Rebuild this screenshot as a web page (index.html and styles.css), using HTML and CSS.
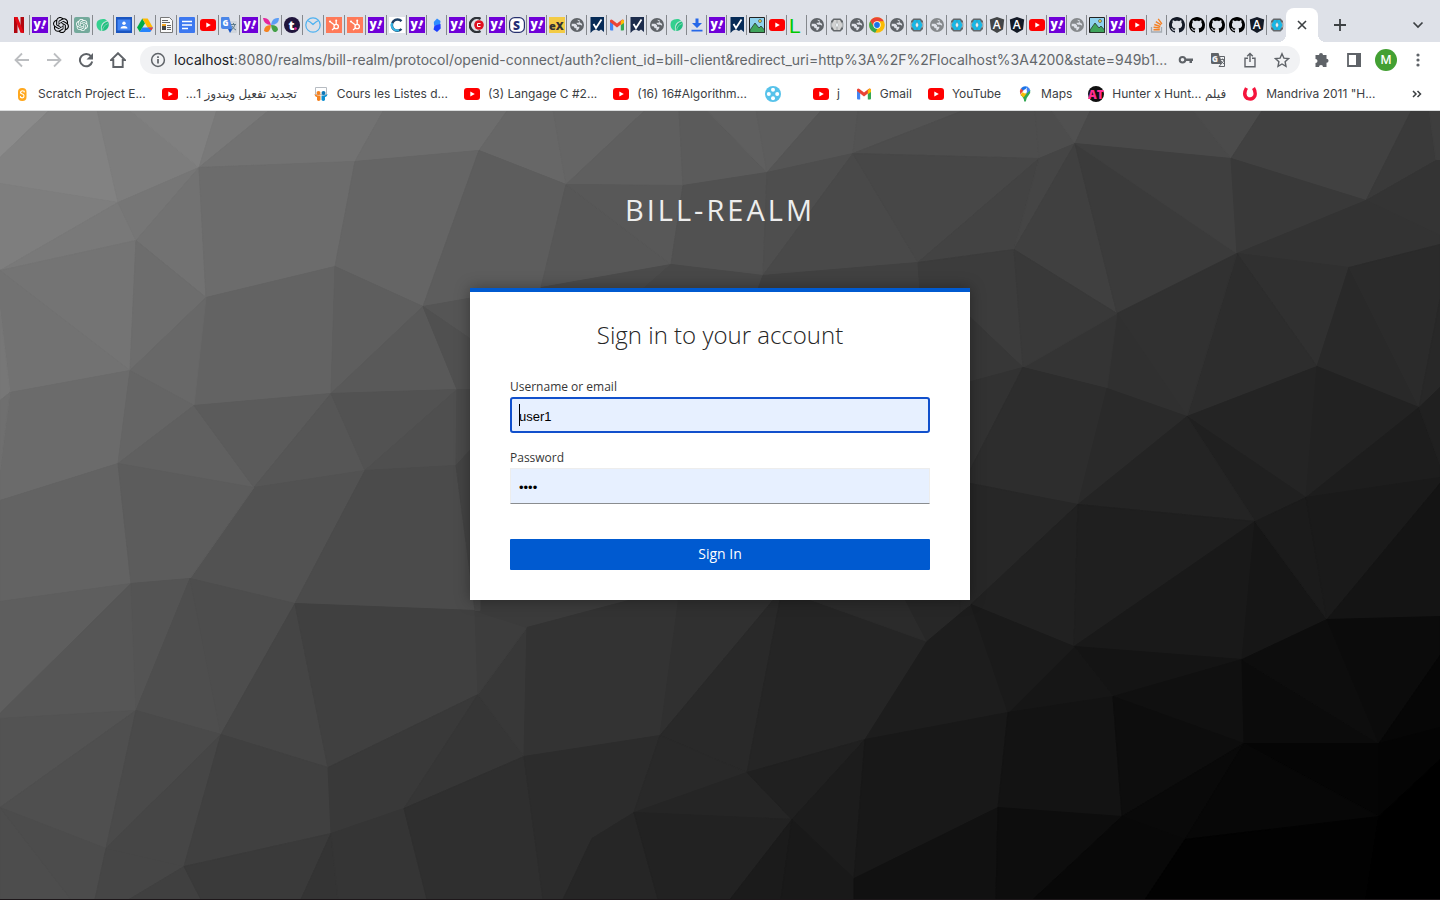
FILE: index.html
```html
<!DOCTYPE html>
<html lang="en">
<head>
<meta charset="utf-8">
<title>Sign in to bill-realm</title>
<link rel="stylesheet" href="styles.css">
</head>
<body>
<svg class="sprite" aria-hidden="true">
  <symbol id="netflix" viewBox="0 0 16 16"><path fill="#b1060f" d="M3 0h3.500v16L3 16zM9.500 0H13v16l-3.500-.4z"/><path fill="#e50914" d="M3 0h3.500L13 16l-3.500-.4z"/></symbol>
  <symbol id="yahoo" viewBox="0 0 16 16"><path fill="#6f00d8" d="M0 0h16v16H0z"/><text x="1.500" y="11" class="glyph" font-size="12" fill="#fff">y</text><text x="8.500" y="11.500" class="glyph" font-size="12" fill="#fff" transform="rotate(20 10 11)">!</text></symbol>
  <symbol id="knot" viewBox="0 0 24 24"><path fill="currentColor" d="M22.280 9.820a5.980 5.980 0 0 0-.52-4.910 6.050 6.050 0 0 0-6.510-2.900A6.070 6.070 0 0 0 4.980 4.180a5.980 5.980 0 0 0-4 2.900 6.050 6.050 0 0 0 .74 7.100 5.980 5.980 0 0 0 .51 4.910 6.050 6.050 0 0 0 6.510 2.900A5.980 5.980 0 0 0 13.260 24a6.060 6.060 0 0 0 5.770-4.210 5.990 5.990 0 0 0 4-2.900 6.060 6.060 0 0 0-.75-7.070zm-9.020 12.610a4.480 4.480 0 0 1-2.880-1.040l.14-.08 4.780-2.760a.8.8 0 0 0 .39-.68v-6.740l2.020 1.170v5.620a4.500 4.500 0 0 1-4.450 4.510zM3.600 18.300a4.470 4.470 0 0 1-.54-3.010l.14.09 4.780 2.760a.77.77 0 0 0 .78 0l5.840-3.370v2.330l-4.870 2.820A4.500 4.500 0 0 1 3.600 18.300zM2.340 7.900a4.490 4.490 0 0 1 2.370-1.970v5.680a.77.77 0 0 0 .39.67l5.810 3.360-2.020 1.160-4.850-2.780A4.500 4.500 0 0 1 2.340 7.900zm16.600 3.850-5.840-3.390 2.020-1.160 4.850 2.780a4.490 4.490 0 0 1-.68 8.100v-5.670a.79.79 0 0 0-.35-.66zm2.010-3.020-.14-.09-4.770-2.780a.78.78 0 0 0-.79 0L9.410 9.230V6.900l4.860-2.790a4.500 4.500 0 0 1 6.680 4.620zM8.300 12.860l-2.020-1.160V6.070a4.500 4.500 0 0 1 7.380-3.450l-.14.08L8.740 5.460a.79.79 0 0 0-.39.68zm1.100-2.360 2.600-1.500 2.610 1.500v3L12 15l-2.610-1.500z"/></symbol>
  <symbol id="gpt" viewBox="0 0 16 16"><rect width="16" height="16" rx="2" fill="#74aa9c"/><g color="#fff"><use href="#knot" x="2" y="2" width="12" height="12"/></g></symbol>
  <symbol id="leaf" viewBox="0 0 16 16"><path fill="#34d08f" d="M2.500 4C5 1.500 11 1 12 4 7 5 5.500 8 6.500 14 1.500 13 .5 7 2.500 4z"/><path fill="#22bf80" d="M7 14C6 8.500 8.500 5 13 4.500 15.500 9 12 14 7 14z"/><path stroke="#b9e8d4" stroke-width=".6" fill="none" d="M6.700 14C5.500 8.500 7.500 5 12.500 4.200M7.500 13.500C8 10 9.500 8 13 6.500"/></symbol>
  <symbol id="classroom" viewBox="0 0 16 16"><path fill="#1a55c0" d="M0 0h16v16H0z"/><path fill="#4285f4" d="M1.500 2.500h13v11h-13z"/><circle cx="8" cy="6.300" r="1.700" fill="#fff"/><path fill="#fff" d="M4.500 11.500q0-2.500 3.500-2.500t3.500 2.500z"/></symbol>
  <symbol id="drive" viewBox="0 0 16 16"><path fill="#00ac47" d="M5.300 1.500 8 6.200 2.800 15 0 10.500z"/><path fill="#ffba00" d="M5.300 1.500h5.400l5.200 9h-5.300z"/><path fill="#2684fc" d="M5.300 10.500H16L13.300 15H2.700z"/><path fill="#ea4335" d="M10.600 10.500H16l-1.500 3z"/></symbol>
  <symbol id="news" viewBox="0 0 16 16"><path fill="#fafafa" stroke="#777" d="M2.500.5h9l3 3v12h-12z"/><path stroke="#666" d="M4 3.500h6M4 5.500h8M9 8.500h4M9 10.500h4M9 12.500h4"/><path fill="#444" d="M4 8h4v5H4z"/><path fill="#f5a623" d="M4 7h4v2H4z"/></symbol>
  <symbol id="docs" viewBox="0 0 16 16"><rect width="16" height="16" rx="1" fill="#3d78f0"/><path stroke="#fff" stroke-width="1.600" d="M3 4.500h10M3 8h10M3 11.500h6"/></symbol>
  <symbol id="youtube" viewBox="0 0 16 16"><rect y="2" width="16" height="12" rx="3" fill="#f00"/><path fill="#fff" d="m6.300 5.500 4.500 2.500-4.500 2.500z"/></symbol>
  <symbol id="gtranslate" viewBox="0 0 16 16"><path fill="#d0d5dc" d="M7 4h8q1 0 1 1v10q0 1-1 1H9z"/><path fill="#4a86e8" d="M1 0h7l3.500 12H2q-2 0-2-2V1q0-1 1-1z"/><path fill="#1a56c4" d="M7 12h4.500L9 16z"/><text x="1.500" y="9" class="glyph" font-size="8" fill="#fff">G</text><path fill="none" stroke="#607d8b" d="M10 7.500h5M12.500 6v1.500M14 7.500q-1 4-3.500 5M11 9q1.500 3 4 4"/></symbol>
  <symbol id="butterfly" viewBox="0 0 16 16"><path fill="#e6259b" d="M0 1q6-1 8 7Q1 8 0 1z"/><path fill="#5b9df5" d="M16 1q-7-1-8 7 8 0 8-7z"/><path fill="#f5821f" d="M1 14Q1 8 8 8q-1 8-5 7z"/><path fill="#43a047" d="M15 13q0-5-7-5 1 8 5 7z"/></symbol>
  <symbol id="tdot" viewBox="0 0 16 16"><circle cx="8" cy="8" r="8" fill="#20153c"/><text x="4.500" y="12.500" class="glyph" font-size="13" fill="#fff">t</text><circle cx="11.500" cy="11.500" r="1.300" fill="#e6259b"/></symbol>
  <symbol id="ring" viewBox="0 0 16 16"><g fill="none" stroke="#4db1f0" stroke-width="1.200"><circle cx="8" cy="8" r="7.200"/><path d="M2.500 3.500q2.500 1 5.500 4 3-3 5.500-4"/></g></symbol>
  <symbol id="hubspot" viewBox="0 0 16 16"><path fill="#ff7a59" d="M0 0h16v16H0z"/><g stroke="#fff" stroke-width="1.300" fill="none"><circle cx="10.200" cy="9.500" r="2.200"/><path d="M10.200 7V4M8.500 8 4.500 5M8.500 11 6 13"/></g><circle cx="4" cy="4.500" r="1.100" fill="#fff"/><circle cx="10.200" cy="3.500" r="1" fill="#fff"/></symbol>
  <symbol id="coursera" viewBox="0 0 16 16"><path fill="#fff" d="M0 0h16v16H0z"/><path d="M12.500 4.200A5.600 5.600 0 1 0 12.500 12" fill="none" stroke="#1b3f66" stroke-width="2.400"/><path d="M3 6a5.600 5.600 0 0 0 7 7.200" fill="none" stroke="#35b5e5" stroke-width="2"/></symbol>
  <symbol id="jira" viewBox="0 0 16 16"><path fill="#2f8cff" d="M8 1.500 11.500 4 11 8 5 8.500 4.800 5z"/><path fill="#1d3fff" d="m5.500 8.500 6-1.500.2 4.500L8 15l-3.500-2.500z"/></symbol>
  <symbol id="cc" viewBox="0 0 16 16"><path d="M11.500 2A7 7 0 1 0 11.500 14" fill="none" stroke="#2e3238" stroke-width="2.600"/><circle cx="10" cy="8" r="4.800" fill="#e01020"/><path fill="none" stroke="#fff" d="M11.500 6.500h-3v3h3"/></symbol>
  <symbol id="scircle" viewBox="0 0 16 16"><rect x=".6" y=".6" width="14.800" height="14.800" rx="5" fill="#fff" stroke="#27306e" stroke-width="1.200"/><text x="4" y="12.500" class="glyph" font-size="12" fill="#262e75">S</text></symbol>
  <symbol id="ex" viewBox="0 0 16 16"><path fill="#f3cb45" d="M0 0h16v16H0z"/><text x="0" y="12.500" class="glyph" font-size="11" fill="#333">eX</text></symbol>
  <symbol id="globe" viewBox="0 0 24 24"><circle cx="12" cy="12" r="9.500" fill="#dee1e8"/><path fill="currentColor" d="M12 1.500a10.500 10.500 0 1 0 0 21 10.500 10.500 0 0 0 0-21zM4 12q0-1 .2-1.800h5.300L12 12.500v2h3.500v2L13 20H11v-3H8.500l-1.500-3H4zM12 4l4 .8V7l-2 1.500h-2.500V10l2 1.500H17L19.800 13l-.3-3L18 9.500z" fill-rule="evenodd"/></symbol>
  <symbol id="check" viewBox="0 0 16 16"><path fill="currentColor" d="M1.500 0h13.500v15l-3-2.500-2 1.500-3-1.500-3 1-2.500 2.500z"/><path fill="none" stroke="#fff" stroke-width="1.800" d="m4.500 7 2.500 4 5.500-8.500"/></symbol>
  <symbol id="gmail" viewBox="0 0 16 16"><path fill="#4285f4" d="M1 3.500 4.200 6v7.500H2q-1 0-1-1z"/><path fill="#34a853" d="M15 3.500 11.800 6v7.500H14q1 0 1-1z"/><path fill="#ea4335" d="M1 5V3.500Q2 2 3.500 3L8 6.500 12.500 3Q14 2 15 3.500V5l-7 5.500z"/><path fill="#fbbc04" d="m11.800 4 2-1.500Q15 3 15 4v2l-3.200 2.200z"/></symbol>
  <symbol id="download" viewBox="0 0 16 16"><path fill="#2668e8" d="M6.500 1.500h3V6h3.500L8 11 3 6h3.500zM2.500 12.800h11v1.800h-11z"/></symbol>
  <symbol id="picture" viewBox="0 0 16 16"><path fill="#8fd2ee" stroke="#222" d="M.5.5h15v15H.5z"/><path fill="#3fa45b" stroke="#222" stroke-width=".7" d="M1 13 6 6l4 5 2-2 3.500 4v2.500H1z"/><circle cx="11" cy="4" r="1.500" fill="#f7d94c" stroke="#222" stroke-width=".5"/></symbol>
  <symbol id="elle" viewBox="0 0 16 16"><text x="0" y="15.500" class="mono" font-size="21" fill="#00c800">L</text></symbol>
  <symbol id="keycloak" viewBox="0 0 16 16"><path fill="#63676a" d="M4.500 1.500h7L14 4v8l-2.500 2.500h-7L2 12V4z"/><path fill="#a5a9ac" d="M1.500 5.500h13v5h-13z"/><path fill="currentColor" d="M7.800 3H5L2.500 8 5 13h2.800V10.800L6.300 8l1.500-2.800zM8.200 3H11l2.500 5-2.500 5H8.200v-2.200L9.700 8 8.200 5.200z"/><path fill="#eef2f4" d="m8 5.500 1.400 2.500L8 10.500 6.600 8z"/></symbol>
  <symbol id="chrome" viewBox="0 0 16 16"><circle cx="8" cy="8" r="7.800" fill="#fbbc04"/><path fill="#ea4335" d="M1.200 4.200A7.800 7.800 0 0 1 14.800 4.200H8L5 10z"/><path fill="#34a853" d="M1.200 4.200 5 10l3.500 1.500-2.300 4.200A7.800 7.800 0 0 1 1.200 4.200z"/><circle cx="8" cy="8" r="3.700" fill="#fff"/><circle cx="8" cy="8" r="2.900" fill="#1a73e8"/></symbol>
  <symbol id="angular" viewBox="0 0 16 16"><path fill="currentColor" d="m8 0 7.200 2.500-1.200 10L8 16l-6-3.500-1.200-10z"/><text x="3.800" y="12" class="semi" font-size="12" fill="#fff">A</text></symbol>
  <symbol id="stack" viewBox="0 0 16 16"><path fill="none" stroke="#a5abb1" stroke-width="1.300" d="M2.500 10v5h10v-5"/><path stroke="#f48024" stroke-width="1.400" d="M4.500 12.700h6.300M4.600 10.200l6.200.8M5.300 7.500l6 2M6.800 4.600l5.300 3.300M9.200 1.800l3.700 5"/></symbol>
  <symbol id="github" viewBox="0 0 16 16"><path fill="currentColor" d="M8 0C3.580 0 0 3.580 0 8c0 3.540 2.290 6.530 5.470 7.590.4.070.55-.17.55-.38 0-.19-.01-.82-.01-1.490-2.010.37-2.530-.49-2.690-.94-.09-.23-.48-.94-.82-1.130-.28-.15-.68-.52-.01-.53.63-.01 1.080.58 1.230.82.72 1.210 1.870.87 2.330.66.070-.52.280-.87.510-1.070-1.780-.2-3.640-.89-3.640-3.950 0-.87.310-1.590.82-2.150-.08-.2-.36-1.020.08-2.120 0 0 .67-.21 2.200.82.640-.18 1.320-.27 2-.27s1.360.09 2 .27c1.530-1.040 2.200-.82 2.200-.82.440 1.100.16 1.920.08 2.120.51.560.82 1.270.82 2.150 0 3.070-1.870 3.750-3.650 3.950.29.250.54.730.54 1.480 0 1.070-.01 1.930-.01 2.200 0 .21.150.46.550.38A8.010 8.010 0 0 0 16 8c0-4.420-3.580-8-8-8z"/></symbol>
  <symbol id="scratch" viewBox="0 0 16 16"><rect x="4" y="2" width="8.500" height="13" rx="4" fill="#ffa81f"/><path fill="none" stroke="#fff" stroke-width="1.100" d="M10.200 6.500V4.800M10.200 5.500Q8.500 4 7 5.500T8.300 8q2.200.8 1.500 2.700T6.500 11.300V10"/></symbol>
  <symbol id="slides" viewBox="0 0 16 16"><path fill="#fff" stroke="#b7bcc2" d="M2.500 1.500h11v7h-11z"/><circle cx="5.500" cy="7" r="2" fill="#f58220"/><circle cx="10.500" cy="7" r="2" fill="#0c77b8"/><path fill="#f58220" d="M1.500 8q3 2 6 1.500V14q-2 2-3.500 0v-3q-2 0-2.500-3z"/><path fill="#0c8fd0" d="M14.500 8q-3 2-6 1.500V14q2 2 3.500 0v-3q2 0 2.500-3z"/></symbol>
  <symbol id="dots4" viewBox="0 0 16 16"><circle cx="8" cy="8" r="8" fill="#56c2ea"/><g fill="#fff"><circle cx="8" cy="3.800" r="2"/><circle cx="8" cy="12.200" r="2"/><circle cx="3.800" cy="8" r="2"/><circle cx="12.200" cy="8" r="2"/></g></symbol>
  <symbol id="maps" viewBox="0 0 16 16"><path fill="#34a853" d="M3.500 9Q7 11.500 7.200 15.500h1.600Q9 12 11.500 9.500 14 7 13.200 4z"/><path fill="#fbbc04" d="m3.500 8.800 2-2.500 4.500.7-3.500 4.500z"/><path fill="#1a73e8" d="M4 2.200Q7-.8 10.500.8L6 6z"/><path fill="#4285f4" d="M10 .6Q13 2 13.300 4.500L9 8z"/><path fill="#ea4335" d="M3.800 2.500 6.300 4.600 3.300 8.500Q2 5 3.800 2.500z"/><circle cx="8" cy="5.500" r="1.900" fill="#fff"/></symbol>
  <symbol id="at" viewBox="0 0 16 16"><circle cx="8" cy="8" r="8" fill="#101010"/><text x="0" y="13" class="glyph" font-size="12" fill="#ff2e93">AT</text></symbol>
  <symbol id="magnet" viewBox="0 0 16 16"><path d="M4.500 2Q.5 9 5.500 12.500 10.500 14.500 12.800 10 14 6 11.500 2" fill="none" stroke="#f5143c" stroke-width="3.400"/></symbol>
</svg>

<header class="browser">
  <nav class="tabs" aria-label="Open tabs">
    <span class="tab wide"><svg><use href="#netflix"/></svg></span>
    <span class="tab wide"><svg><use href="#yahoo"/></svg></span>
    <span class="tab wide"><svg><use href="#knot"/></svg></span>
    <span class="tab wide"><svg><use href="#gpt"/></svg></span>
    <span class="tab wide"><svg><use href="#leaf"/></svg></span>
    <span class="tab wide"><svg><use href="#classroom"/></svg></span>
    <span class="tab wide"><svg><use href="#drive"/></svg></span>
    <span class="tab wide"><svg><use href="#news"/></svg></span>
    <span class="tab wide"><svg><use href="#docs"/></svg></span>
    <span class="tab wide"><svg><use href="#youtube"/></svg></span>
    <span class="tab wide"><svg><use href="#gtranslate"/></svg></span>
    <span class="tab wide"><svg><use href="#yahoo"/></svg></span>
    <span class="tab wide"><svg><use href="#butterfly"/></svg></span>
    <span class="tab wide"><svg><use href="#tdot"/></svg></span>
    <span class="tab wide"><svg><use href="#ring"/></svg></span>
    <span class="tab wide"><svg><use href="#hubspot"/></svg></span>
    <span class="tab wide"><svg><use href="#hubspot"/></svg></span>
    <span class="tab wide"><svg><use href="#yahoo"/></svg></span>
    <span class="tab"><svg><use href="#coursera"/></svg></span>
    <span class="tab"><svg><use href="#yahoo"/></svg></span>
    <span class="tab"><svg><use href="#jira"/></svg></span>
    <span class="tab"><svg><use href="#yahoo"/></svg></span>
    <span class="tab"><svg><use href="#cc"/></svg></span>
    <span class="tab"><svg><use href="#yahoo"/></svg></span>
    <span class="tab"><svg><use href="#scircle"/></svg></span>
    <span class="tab"><svg><use href="#yahoo"/></svg></span>
    <span class="tab"><svg><use href="#ex"/></svg></span>
    <span class="tab grey"><svg><use href="#globe"/></svg></span>
    <span class="tab navy"><svg><use href="#check"/></svg></span>
    <span class="tab"><svg><use href="#gmail"/></svg></span>
    <span class="tab slate"><svg><use href="#check"/></svg></span>
    <span class="tab grey"><svg><use href="#globe"/></svg></span>
    <span class="tab"><svg><use href="#leaf"/></svg></span>
    <span class="tab"><svg><use href="#download"/></svg></span>
    <span class="tab"><svg><use href="#yahoo"/></svg></span>
    <span class="tab navy"><svg><use href="#check"/></svg></span>
    <span class="tab"><svg><use href="#picture"/></svg></span>
    <span class="tab"><svg><use href="#youtube"/></svg></span>
    <span class="tab"><svg><use href="#elle"/></svg></span>
    <span class="tab grey"><svg><use href="#globe"/></svg></span>
    <span class="tab pale"><svg><use href="#keycloak"/></svg></span>
    <span class="tab grey"><svg><use href="#globe"/></svg></span>
    <span class="tab"><svg><use href="#chrome"/></svg></span>
    <span class="tab grey"><svg><use href="#globe"/></svg></span>
    <span class="tab cyan"><svg><use href="#keycloak"/></svg></span>
    <span class="tab light"><svg><use href="#globe"/></svg></span>
    <span class="tab cyan"><svg><use href="#keycloak"/></svg></span>
    <span class="tab cyan"><svg><use href="#keycloak"/></svg></span>
    <span class="tab ash"><svg><use href="#angular"/></svg></span>
    <span class="tab ink"><svg><use href="#angular"/></svg></span>
    <span class="tab"><svg><use href="#youtube"/></svg></span>
    <span class="tab"><svg><use href="#yahoo"/></svg></span>
    <span class="tab light"><svg><use href="#globe"/></svg></span>
    <span class="tab"><svg><use href="#picture"/></svg></span>
    <span class="tab"><svg><use href="#yahoo"/></svg></span>
    <span class="tab"><svg><use href="#youtube"/></svg></span>
    <span class="tab"><svg><use href="#stack"/></svg></span>
    <span class="tab ink"><svg><use href="#github"/></svg></span>
    <span class="tab"><svg><use href="#github"/></svg></span>
    <span class="tab"><svg><use href="#github"/></svg></span>
    <span class="tab"><svg><use href="#github"/></svg></span>
    <span class="tab ink"><svg><use href="#angular"/></svg></span>
    <span class="tab cyan last"><svg><use href="#keycloak"/></svg></span>
    <span class="tab-active"><button type="button" class="icon-btn" aria-label="Close tab"><svg viewBox="0 0 16 16"><path d="m4 4 8 8M12 4l-8 8" stroke="#3c4043" stroke-width="1.600"/></svg></button></span>
    <button type="button" class="icon-btn new-tab" aria-label="New tab"><svg viewBox="0 0 16 16"><path d="M8 2v12M2 8h12" stroke="#3c4043" stroke-width="1.800"/></svg></button>
    <button type="button" class="icon-btn tab-search" aria-label="Search tabs"><svg viewBox="0 0 16 16"><path d="m3.500 5.500 4.500 4.500 4.500-4.500" fill="none" stroke="#3c4043" stroke-width="1.700"/></svg></button>
  </nav>

  <div class="toolbar">
    <button type="button" class="icon-btn" aria-label="Back"><svg viewBox="0 0 16 16"><path d="M15 8H2M8 1.500 1.500 8 8 14.500" fill="none" stroke="#bcbec1" stroke-width="1.800"/></svg></button>
    <button type="button" class="icon-btn" aria-label="Forward"><svg viewBox="0 0 16 16"><path d="M1 8h13M8 1.500 14.500 8 8 14.500" fill="none" stroke="#bcbec1" stroke-width="1.800"/></svg></button>
    <button type="button" class="icon-btn" aria-label="Reload"><svg viewBox="0 0 16 16"><path d="M13.200 4.500A6.200 6.200 0 1 0 14.200 9.500" fill="none" stroke="#5f6368" stroke-width="2"/><path fill="#5f6368" d="M15 1v6.500H8.500z"/></svg></button>
    <button type="button" class="icon-btn" aria-label="Home"><svg viewBox="0 0 16 16"><path d="M8 1.200 1 8h2.300v7h9.400V8H15z" fill="none" stroke="#5f6368" stroke-width="1.900"/></svg></button>
    <div class="omnibox">
      <svg class="ico" viewBox="0 0 16 16"><circle cx="8" cy="8" r="6.400" fill="none" stroke="#5f6368" stroke-width="1.500"/><path d="M8 7v4.500M8 4.300v1.700" stroke="#5f6368" stroke-width="1.700"/></svg>
      <span class="url"><b>localhost</b>:8080/realms/bill-realm/protocol/openid-connect/auth?client_id=bill-client&amp;redirect_uri=http%3A%2F%2Flocalhost%3A4200&amp;state=949b1...</span>
      <div class="omni-actions">
        <svg class="ico" viewBox="0 0 16 16"><circle cx="4.500" cy="7.800" r="2.800" fill="none" stroke="#5f6368" stroke-width="2"/><path fill="#5f6368" d="M7 6.500h8v2.500h-1v2h-2.500v-2H7z"/></svg>
        <svg class="ico" viewBox="0 0 16 16"><path fill="#5f6368" d="M1.500 1h7L12 12H2.500Q1 12 1 10.500V2q0-1 .5-1z"/><path fill="#f1f3f4" stroke="#5f6368" d="M9.500 4.500h5v10H9l2.500-3z"/><text x="2" y="9.500" class="glyph" font-size="8" fill="#f1f3f4">G</text><path d="M10.500 7.500h4M12.500 6.500v1M14 7.500q-.5 3-3 4.500M11 9l3 3" fill="none" stroke="#5f6368" stroke-width=".9"/></svg>
        <svg class="ico" viewBox="0 0 16 16"><path d="M6 6.200H3v8.500h10V6.200h-3M8 10V1.500M5.200 4.200 8 1.400l2.800 2.800" fill="none" stroke="#5f6368" stroke-width="1.400"/></svg>
        <svg class="ico" viewBox="0 0 16 16"><path d="m8 1.800 1.900 4.300 4.600.5-3.400 3.100.9 4.600L8 12l-4 2.300.9-4.600L1.500 6.600l4.600-.5z" fill="none" stroke="#5f6368" stroke-width="1.400"/></svg>
      </div>
    </div>
    <button type="button" class="icon-btn" aria-label="Extensions"><svg viewBox="0 0 16 16"><path fill="#5f6368" d="M5 3a2 2 0 0 1 4 0h3.500v3.700a2 2 0 0 1 0 4.100V15H9a2 2 0 0 0-4 0H1.500v-4a2 2 0 0 0 0-4V3z"/></svg></button>
    <button type="button" class="icon-btn" aria-label="Side panel"><svg viewBox="0 0 16 16"><path d="M2 2h12v12H2z" fill="none" stroke="#5f6368" stroke-width="1.800"/><path fill="#5f6368" d="M10 1h5v14h-5z"/></svg></button>
    <button type="button" class="avatar">M</button>
    <button type="button" class="icon-btn" aria-label="Menu"><svg viewBox="0 0 16 16"><g fill="#5f6368"><circle cx="8" cy="3" r="1.600"/><circle cx="8" cy="8" r="1.600"/><circle cx="8" cy="13" r="1.600"/></g></svg></button>
  </div>

  <nav class="bookmarks" aria-label="Bookmarks">
    <a href="#"><svg><use href="#scratch"/></svg><span>Scratch Project E...</span></a>
    <a href="#"><svg><use href="#youtube"/></svg><span dir="rtl">تجديد تفعيل ويندوز 1...</span></a>
    <a href="#"><svg><use href="#slides"/></svg><span>Cours les Listes d...</span></a>
    <a href="#"><svg><use href="#youtube"/></svg><span>(3) Langage C #2...</span></a>
    <a href="#"><svg><use href="#youtube"/></svg><span>(16) 16#Algorithm...</span></a>
    <a href="#" aria-label="Bookmark" class="bare"><svg><use href="#dots4"/></svg></a>
    <a href="#"><svg><use href="#youtube"/></svg><span>j</span></a>
    <a href="#"><svg><use href="#gmail"/></svg><span>Gmail</span></a>
    <a href="#"><svg><use href="#youtube"/></svg><span>YouTube</span></a>
    <a href="#"><svg><use href="#maps"/></svg><span>Maps</span></a>
    <a href="#"><svg><use href="#at"/></svg><span>Hunter x Hunt... فيلم</span></a>
    <a href="#"><svg><use href="#magnet"/></svg><span>Mandriva 2011 "H...</span></a>
    <button type="button" class="icon-btn more" aria-label="More bookmarks"><svg viewBox="0 0 16 16"><path d="m4 5 3 3-3 3M8.500 5l3 3-3 3" fill="none" stroke="#3c4043" stroke-width="1.500"/></svg></button>
  </nav>
</header>

<main class="page">
  <svg class="mesh" viewBox="0 111 1440 789" preserveAspectRatio="xMidYMid slice" aria-hidden="true">
    <path color="#484848" d="M0 110H1440V900H0z"/>
    <path color="#8b8b8b" d="M0 110H50L0 158z"/>
    <path color="#828282" d="M50 110H97L118 203 0 184V158z"/>
    <path color="#7d7d7d" d="M97 110H129L199 168 118 203z"/>
    <path color="#808080" d="M129 110H217L199 168z"/>
    <path color="#797979" d="M217 110H270L199 168z"/>
    <path color="#727272" d="M270 110H384L355 162 199 168z"/>
    <path color="#6d6d6d" d="M384 110H508L479 151 355 162z"/>
    <path color="#7e7e7e" d="M0 184 118 203 0 271z"/>
    <path color="#797979" d="M118 203 136 241 0 271z"/>
    <path color="#767676" d="M118 203 199 168 136 241z"/>
    <path color="#727272" d="M199 168 206 298 136 241z"/>
    <path color="#6c6c6c" d="M199 168 355 162 335 267 206 298z"/>
    <path color="#656565" d="M355 162 479 151 423 307 335 267z"/>
    <path color="#747474" d="M0 271 136 241 130 371z"/>
    <path color="#727272" d="M0 271 130 371 10 393 0 310z"/>
    <path color="#777777" d="M0 310 10 393 0 401z"/>
    <path color="#6d6d6d" d="M136 241 206 298 130 371z"/>
    <path color="#636363" d="M206 298 335 267 331 394 194 406z"/>
    <path color="#686868" d="M206 298 194 406 130 371z"/>
    <path color="#5e5e5e" d="M335 267 423 307 331 394z"/>
    <path color="#595959" d="M423 307 457 390 331 394z"/>
    <path color="#6b6b6b" d="M10 393 130 371 118 464 0 501V470z"/>
    <path color="#6f6f6f" d="M0 401 10 393 0 470z"/>
    <path color="#656565" d="M130 371 194 406 118 464z"/>
    <path color="#606060" d="M118 464 194 406 254 488z"/>
    <path color="#5b5b5b" d="M194 406 331 394 254 488z"/>
    <path color="#565656" d="M331 394 365 471 254 488z"/>
    <path color="#525252" d="M331 394 457 390 365 471z"/>
    <path color="#525252" d="M254 488 365 471 295 604 190 579z"/>
    <path color="#4f4f4f" d="M457 390 456 466 365 471z"/>
    <path color="#4b4b4b" d="M365 471 456 466 475 611 295 604z"/>
    <path color="#636363" d="M0 501 118 464 131 584 0 602z"/>
    <path color="#5c5c5c" d="M118 464 254 488 190 579 131 584z"/>
    <path color="#5e5e5e" d="M0 602 131 584 0 714z"/>
    <path color="#565656" d="M131 584 136 711 0 719V714z"/>
    <path color="#545454" d="M131 584 190 579 136 711z"/>
    <path color="#4e4e4e" d="M190 579 221 735 136 711z"/>
    <path color="#4d4d4d" d="M190 579 295 604 221 735z"/>
    <path color="#454545" d="M295 604 328 768 221 735z"/>
    <path color="#404040" d="M295 604 475 611 478 695 328 768z"/>
    <path color="#535353" d="M0 719 136 711 0 808z"/>
    <path color="#4f4f4f" d="M136 711 106 849 0 808z"/>
    <path color="#4a4a4a" d="M136 711 221 735 106 849z"/>
    <path color="#464646" d="M221 735 184 867 106 849z"/>
    <path color="#404040" d="M221 735 328 768 331 834 184 867z"/>
    <path color="#393939" d="M328 768 478 695 404 809 331 834z"/>
    <path color="#363636" d="M478 695 524 757 404 809z"/>
    <path color="#383838" d="M478 695 527 628 524 757z"/>
    <path color="#3d3d3d" d="M475 611 527 628 478 695z"/>
    <path color="#4d4d4d" d="M0 808 71 900H0z"/>
    <path color="#4c4c4c" d="M0 808 106 849 95 900H71z"/>
    <path color="#464646" d="M106 849 184 867 129 900H95z"/>
    <path color="#404040" d="M184 867 201 900H129z"/>
    <path color="#3a3a3a" d="M184 867 331 834 301 900H201z"/>
    <path color="#343434" d="M331 834 338 900H301z"/>
    <path color="#353535" d="M331 834 404 809 427 900H338z"/>
    <path color="#2f2f2f" d="M404 809 524 757 543 900H427z"/>
    <path color="#3b3b3b" d="M475 611 485 590H670L527 628z"/>
    <path color="#333333" d="M527 628 670 590H680L660 736 524 757z"/>
    <path color="#303030" d="M660 736 680 590H782z"/>
    <path color="#292929" d="M660 736 782 590 747 773z"/>
    <path color="#252525" d="M747 773 782 590 927 642 865 740z"/>
    <path color="#2b2b2b" d="M927 642 782 590H900z"/>
    <path color="#272727" d="M927 642 900 590 985 592 971 605z"/>
    <path color="#1d1d1d" d="M927 642 971 605 1008 713 865 740z"/>
    <path color="#2c2c2c" d="M524 757 660 736 634 813 592 839 563 900H543z"/>
    <path color="#292929" d="M660 736 747 773 634 813z"/>
    <path color="#252525" d="M634 813 747 773 792 820z"/>
    <path color="#202020" d="M747 773 865 740 792 820z"/>
    <path color="#1c1c1c" d="M865 740 854 879 792 820z"/>
    <path color="#181818" d="M865 740 1008 713 998 808 854 879z"/>
    <path color="#262626" d="M592 839 634 813 658 900H563z"/>
    <path color="#222222" d="M634 813 792 820 730 900H658z"/>
    <path color="#1b1b1b" d="M792 820 781 900H730z"/>
    <path color="#191919" d="M792 820 854 879V900H781z"/>
    <path color="#111111" d="M854 879 998 808 996 900H854z"/>
    <path color="#676767" d="M508 110H553L566 185 479 151z"/>
    <path color="#656565" d="M553 110H646L566 185z"/>
    <path color="#5f5f5f" d="M646 110H679L683 186 566 185z"/>
    <path color="#5b5b5b" d="M679 110H706L767 173 683 186z"/>
    <path color="#5f5f5f" d="M706 110H756L767 173z"/>
    <path color="#5d5d5d" d="M756 110H822L767 173z"/>
    <path color="#555555" d="M822 110H858L853 154 767 173z"/>
    <path color="#535353" d="M858 110H966L853 154z"/>
    <path color="#4d4d4d" d="M966 110H1035L1039 159 853 154z"/>
    <path color="#5d5d5d" d="M479 151 566 185 541 300 480 297 423 307z"/>
    <path color="#575757" d="M566 185 671 265 541 288z"/>
    <path color="#585858" d="M566 185 683 186 671 265z"/>
    <path color="#4b4b4b" d="M671 265 640 292H541V288z"/>
    <path color="#515151" d="M683 186 767 173 763 276 671 265z"/>
    <path color="#4e4e4e" d="M767 173 853 154 763 276z"/>
    <path color="#484848" d="M671 265 763 276 757 292H640z"/>
    <path color="#494949" d="M853 154 918 263 763 276z"/>
    <path color="#414141" d="M763 276 918 263 920 292H757z"/>
    <path color="#474747" d="M853 154 1039 159 918 263z"/>
    <path color="#434343" d="M1039 159 1014 250 918 263z"/>
    <path color="#3c3c3c" d="M918 263 1014 250 1023 368 920 292z"/>
    <path color="#4d4d4d" d="M1035 110H1051L1075 144 1039 159z"/>
    <path color="#505050" d="M1051 110H1091L1075 144z"/>
    <path color="#494949" d="M1091 110H1192L1231 159 1075 144z"/>
    <path color="#4b4b4b" d="M1192 110H1263L1231 159z"/>
    <path color="#414141" d="M1263 110H1412L1366 201 1231 159z"/>
    <path color="#3a3a3a" d="M1412 110H1429L1436 161 1366 201z"/>
    <path color="#3e3e3e" d="M1429 110H1440V161H1436z"/>
    <path color="#454545" d="M1039 159 1075 144 1014 250z"/>
    <path color="#404040" d="M1075 144 1117 314 1014 250z"/>
    <path color="#3b3b3b" d="M1075 144 1237 254 1117 314z"/>
    <path color="#3f3f3f" d="M1075 144 1231 159 1237 254z"/>
    <path color="#393939" d="M1231 159 1366 201 1237 254z"/>
    <path color="#343434" d="M1366 201 1436 161H1440V236z"/>
    <path color="#333333" d="M1366 201 1440 236V245L1349 268 1237 254z"/>
    <path color="#303030" d="M1237 254 1349 268 1317 367z"/>
    <path color="#2d2d2d" d="M1237 254 1317 367 1187 417z"/>
    <path color="#313131" d="M1237 254 1187 417 1117 314z"/>
    <path color="#303030" d="M1117 314 1187 417 1107 389z"/>
    <path color="#343434" d="M1117 314 1107 389 1023 368z"/>
    <path color="#393939" d="M1014 250 1117 314 1023 368z"/>
    <path color="#373737" d="M960 308 1023 368 960 385z"/>
    <path color="#323232" d="M960 385 1023 368 960 490z"/>
    <path color="#2d2d2d" d="M1023 368 1107 389 1078 505 960 482V490z"/>
    <path color="#2a2a2a" d="M1107 389 1187 417 1078 505z"/>
    <path color="#292929" d="M1349 268 1419 408 1317 367z"/>
    <path color="#2b2b2b" d="M1349 268 1440 245V300L1419 408z"/>
    <path color="#282828" d="M1440 300V388L1419 408z"/>
    <path color="#242424" d="M1317 367 1306 498 1187 417z"/>
    <path color="#222222" d="M1317 367 1419 408 1306 498z"/>
    <path color="#202020" d="M1187 417 1306 498 1255 522z"/>
    <path color="#242424" d="M1187 417 1255 522 1078 505z"/>
    <path color="#272727" d="M960 482 1078 505 971 605 960 612z"/>
    <path color="#212121" d="M1078 505 1074 647 971 605z"/>
    <path color="#1f1f1f" d="M1078 505 1255 522 1074 647z"/>
    <path color="#191919" d="M1255 522 1242 660 1074 647z"/>
    <path color="#161616" d="M1255 522 1327 620 1242 660z"/>
    <path color="#1b1b1b" d="M1255 522 1306 498 1327 620z"/>
    <path color="#1d1d1d" d="M1419 408 1440 465V478L1306 498z"/>
    <path color="#202020" d="M1419 408 1440 388V465z"/>
    <path color="#1a1a1a" d="M1306 498 1440 478V484L1327 620z"/>
    <path color="#141414" d="M1440 484V617L1327 620z"/>
    <path color="#141414" d="M1074 647 1242 660 1113 697z"/>
    <path color="#161616" d="M1074 647 1113 697 1008 713z"/>
    <path color="#1a1a1a" d="M971 605 1074 647 1008 713z"/>
    <path color="#131313" d="M1008 713 1113 697 1122 817 998 808z"/>
    <path color="#101010" d="M1242 660 1244 744 1113 697z"/>
    <path color="#0d0d0d" d="M1113 697 1244 744 1122 817z"/>
    <path color="#090909" d="M1244 744 1185 840 1122 817z"/>
    <path color="#0b0b0b" d="M1242 660 1379 744H1244z"/>
    <path color="#0d0d0d" d="M1242 660 1327 620 1379 744z"/>
    <path color="#0b0b0b" d="M1327 620 1440 617V656L1379 744z"/>
    <path color="#060606" d="M1440 656V728L1379 744z"/>
    <path color="#050505" d="M1244 744H1379V817z"/>
    <path color="#070707" d="M1244 744 1379 817 1185 840z"/>
    <path color="#040404" d="M1379 744 1440 728V760L1379 817z"/>
    <path color="#0d0d0d" d="M998 808 1122 817 1033 900H996z"/>
    <path color="#080808" d="M1122 817 1185 840 1145 900H1033z"/>
    <path color="#020202" d="M1185 840 1379 817 1366 900H1145z"/>
    <path color="#000000" d="M1379 817 1440 760V900H1366z"/>
    <path color="#555555" d="M423 307 480 297V346z"/>
    <path color="#505050" d="M423 307 480 346V390L457 390z"/>
    <path color="#4a4a4a" d="M457 390H480V440L456 466z"/>
    <path color="#444444" d="M456 466 480 440V611L475 611z"/>
  </svg>
  <div class="login">
    <h2 class="realm">BILL-REALM</h2>
    <form class="card">
      <h1>Sign in to your account</h1>
      <div class="field">
        <label for="username">Username or email</label>
        <input id="username" class="focused" type="text" value="user1">
      </div>
      <div class="field">
        <label for="password">Password</label>
        <input id="password" type="password" value="1234">
      </div>
      <button type="button" class="submit">Sign In</button>
    </form>
  </div>
</main>
</body>
</html>
```
FILE: styles.css
```css
* { box-sizing: border-box; }
body {
  margin: 0;
  min-height: 100vh;
  display: flex;
  flex-direction: column;
  font-family: "Open Sans", "Noto Sans", sans-serif;
}
.sprite { display: none; }
.glyph { font-family: "Open Sans", sans-serif; font-weight: 800; }
.semi { font-family: "Open Sans", sans-serif; font-weight: 600; }
.mono { font-family: "Liberation Sans", sans-serif; font-weight: 400; }

.browser {
  background: #fff;
  border-bottom: 1px solid #dadcdd;
  font-family: Inter, Roboto, "Noto Sans", "DejaVu Sans", sans-serif;
}

.tabs {
  display: flex;
  align-items: flex-end;
  height: 42px;
  padding-left: 9px;
  background: #dee1e8;
}
.tab {
  flex: 0 0 20px;
  display: flex;
  align-items: center;
  height: 20px;
  margin-bottom: 7px;
  padding-left: 2px;
  border-right: 1px solid #85888d;
}
.tab.wide { flex-basis: 21px; }
.tab.last { border-right: 0; }
.tab svg { width: 16px; height: 16px; }
.grey { color: #5f6368; }
.light { color: #85888b; }
.pale { color: #d2d2d2; }
.cyan { color: #18b8e6; }
.navy { color: #062b57; }
.slate { color: #1c2c4c; }
.ash { color: #434547; }
.ink { color: #141a26; }

.tab-active {
  position: relative;
  flex: 0 0 32px;
  display: flex;
  align-items: center;
  justify-content: center;
  height: 34px;
  margin-left: -1px;
  border-radius: 8px 8px 0 0;
  background: #fff;
}
.tab-active::before, .tab-active::after {
  content: "";
  position: absolute;
  bottom: 0;
  width: 8px;
  height: 8px;
}
.tab-active::before { right: 100%; background: radial-gradient(circle at 0 0, transparent 8px, #fff 8px); }
.tab-active::after { left: 100%; background: radial-gradient(circle at 100% 0, transparent 8px, #fff 8px); }
.icon-btn {
  display: flex;
  flex: none;
  padding: 0;
  border: 0;
  background: none;
}
.icon-btn svg, .ico { display: block; flex: none; width: 16px; height: 16px; }
.new-tab { margin: 0 0 9px 14px; }
.tab-search { margin: 0 14px 9px auto; }

.toolbar {
  display: flex;
  align-items: center;
  gap: 16px;
  height: 36px;
  padding: 0 14px;
}
.omnibox {
  flex: 1;
  min-width: 0;
  display: flex;
  align-items: center;
  gap: 8px;
  height: 28px;
  margin: 0 -2px;
  padding: 0 10px;
  border-radius: 14px;
  background: #f1f2f4;
}
.url {
  flex: 1;
  min-width: 0;
  overflow: hidden;
  white-space: nowrap;
  font-size: 14px;
  line-height: 20px;
  color: #63676b;
}
.url b { font-weight: 400; color: #202124; }
.omni-actions { display: flex; gap: 16px; }
.avatar {
  flex: none;
  width: 22px;
  height: 22px;
  margin: 0 -3px;
  padding: 0;
  border: 0;
  border-radius: 50%;
  background: #43a033;
  color: #fff;
  font: 500 12px/22px Inter, sans-serif;
}

.bookmarks {
  display: flex;
  align-items: center;
  gap: 16px;
  height: 32px;
  padding: 0 15px 0 14px;
}
.bookmarks a {
  display: flex;
  align-items: center;
  gap: 8px;
  white-space: nowrap;
  font-size: 12px;
  line-height: 16px;
  color: #3c4043;
  text-decoration: none;
}
.bookmarks a svg { flex: none; width: 16px; height: 16px; }
.bookmarks .bare { padding: 0 16px 0 2px; }
.more { margin-left: auto; }

.page {
  position: relative;
  flex: 1;
  display: flex;
  justify-content: center;
  border-bottom: 1px solid #1d171a;
  background: #484848;
}
.mesh { position: absolute; inset: 0; width: 100%; height: 100%; }
.mesh path { fill: currentColor; stroke: currentColor; stroke-width: 1; stroke-linejoin: round; }
.login {
  position: relative;
  width: 500px;
  max-width: 100%;
}
.realm {
  margin: 0;
  padding: 81px 10px 61px;
  text-align: center;
  font-size: 29px;
  line-height: 35px;
  font-weight: 400;
  letter-spacing: 3px;
  color: #ededed;
}
.card {
  padding: 28px 40px 30px;
  border-top: 4px solid #005ad0;
  background: #fff;
  box-shadow: 0 0 14px rgba(0, 0, 0, .35);
}
.card h1 {
  margin: 0 0 29px;
  text-align: center;
  font-size: 24px;
  line-height: 29px;
  font-weight: 300;
  color: #252525;
}
.field {
  display: flex;
  flex-direction: column;
  gap: 1px;
  margin-bottom: 16px;
}
.field label { font-size: 12px; line-height: 18px; color: #363636; }
.field input {
  width: 100%;
  height: 36px;
  padding: 2px 8px 0;
  border: 1px solid #ededed;
  border-bottom-color: #8a8d90;
  outline: 0;
  background: #e7f0ff;
  font: 13px/20px "Liberation Sans", Arial, sans-serif;
  color: #000;
}
.field .focused {
  padding: 2px 7px 0;
  border: 2px solid #1150cc;
  border-radius: 3px;
  background: linear-gradient(#000, #000) 7px 5px / 1px 22px no-repeat #e7f0ff;
}
.submit {
  display: block;
  width: 100%;
  height: 31px;
  margin-top: 35px;
  padding: 0 0 2px;
  border: 0;
  border-radius: 1px;
  background: #005ad0;
  color: #fff;
  font: 500 14px/29px "Open Sans", sans-serif;
}
```
